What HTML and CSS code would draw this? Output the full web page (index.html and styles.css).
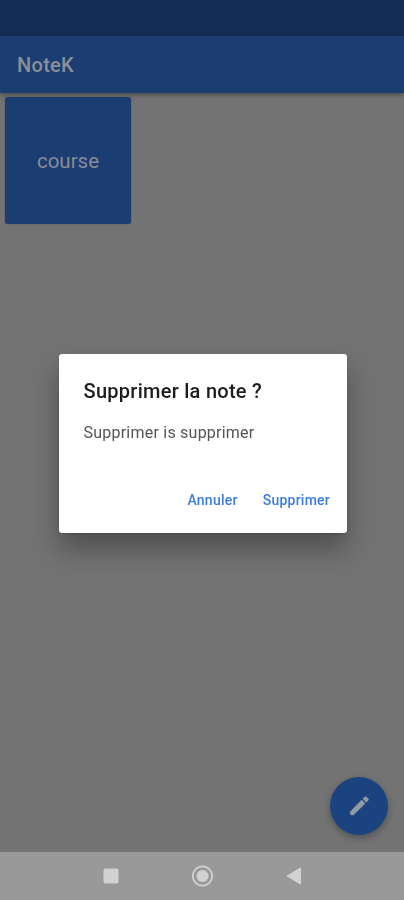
FILE: index.html
```html
<!DOCTYPE html>
<html lang="fr">
<head>
    <meta charset="UTF-8">
    <meta name="viewport" content="width=device-width, initial-scale=1.0">
    <title>NoteK</title>
    <link rel="stylesheet" href="styles.css">
</head>
<body>
    <div class="screen">
        <div class="status-bar"></div>
        <header class="header">
            <h1>NoteK</h1>
        </header>

        <main class="notes">
            <div class="note">course</div>
        </main>

        <!-- Android navigation buttons -->
        <div class="nav-bar">
            <svg width="20" height="20" viewBox="0 0 20 20">
                <rect x="2.5" y="2.5" width="15" height="15" rx="2" fill="#d2d2d2"/>
            </svg>
            <svg width="24" height="24" viewBox="0 0 24 24">
                <circle cx="11.5" cy="12" r="9.7" fill="none" stroke="#d0d0d0" stroke-width="1.8"/>
                <circle cx="11.5" cy="12" r="6" fill="#d2d2d2"/>
            </svg>
            <svg width="20" height="20" viewBox="0 0 20 20">
                <path d="M3 10L16.5 2v16z" fill="#d2d2d2" stroke="#d2d2d2" stroke-width="1" stroke-linejoin="round"/>
            </svg>
        </div>
    </div>

    <button class="fab" aria-label="Nouvelle note">
        <svg width="26" height="26" viewBox="0 0 24 24">
            <path d="M4 17.2V19.2a1 1 0 0 0 1 1h1.9L17.6 9.6l-3.1-3.1zM20.4 6.8a1.1 1.1 0 0 0 0-1.5l-1.6-1.6a1.1 1.1 0 0 0-1.5 0l-1.7 1.7 3.1 3.1z" fill="#949ba4" stroke="#949ba4" stroke-width=".5" stroke-linejoin="round"/>
        </svg>
    </button>

    <div class="dialog" role="dialog">
        <h2>Supprimer la note ?</h2>
        <p>Supprimer is supprimer</p>
        <div class="dialog-actions">
            <button>Annuler</button>
            <button>Supprimer</button>
        </div>
    </div>
</body>
</html>
```

FILE: styles.css
```css
* {
    box-sizing: border-box;
}
body {
    margin: 0;
    font-family: Roboto, "Liberation Sans", sans-serif;
    background-color: #737373;
    overflow: hidden;
}
button {
    font-family: inherit;
    border: none;
    padding: 0;
    background: none;
    cursor: pointer;
}
.screen {
    display: flex;
    flex-direction: column;
    height: 100vh;
}
.status-bar {
    height: 36px;
    background-color: #152d55;
}
.header {
    height: 57px;
    padding-left: 17px;
    display: flex;
    align-items: center;
    background-color: #1c3d72;
    box-shadow: 0 2px 4px rgba(0, 0, 0, 0.35);
}
.header h1 {
    margin: 0;
    font-size: 20px;
    font-weight: 500;
    letter-spacing: 0.3px;
    color: #8a9098;
}
.notes {
    flex: 1;
    padding: 4px 5px;
}
.note {
    width: 126px;
    height: 127px;
    padding-top: 1px;
    display: flex;
    align-items: center;
    justify-content: center;
    border-radius: 3px;
    background-color: #1c3d72;
    color: #858c96;
    font-size: 20.5px;
    box-shadow: 0 0 2px rgba(0, 0, 0, 0.25);
}
.nav-bar {
    height: 48px;
    padding: 0 100px 0 101px;
    display: flex;
    align-items: center;
    justify-content: space-between;
    background-color: #999;
}
.fab {
    position: fixed;
    right: 16px;
    bottom: 65px;
    width: 58px;
    height: 58px;
    display: flex;
    align-items: center;
    justify-content: center;
    border-radius: 50%;
    background-color: #1b4380;
    box-shadow: 0 3px 7px rgba(0, 0, 0, 0.3);
}
.dialog {
    position: fixed;
    top: 354px;
    left: 58.5px;
    width: 288.5px;
    height: 179px;
    padding: 24px 17px 0 25px;
    border-radius: 3px;
    background-color: #fff;
    box-shadow: 0 16px 28px rgba(0, 0, 0, 0.32), 0 1px 3px rgba(0, 0, 0, 0.15);
}
.dialog h2 {
    margin: 0;
    font-size: 20px;
    line-height: 26px;
    font-weight: 500;
    letter-spacing: 0.27px;
    color: #1c1c1c;
}
.dialog p {
    margin: 18px 0 0;
    font-size: 16px;
    line-height: 22px;
    letter-spacing: 0.23px;
    color: #555;
}
.dialog-actions {
    display: flex;
    justify-content: flex-end;
    gap: 25px;
    margin-top: 46px;
}
.dialog-actions button {
    font-size: 14px;
    line-height: 20px;
    font-weight: 500;
    letter-spacing: 0.24px;
    color: #3b7ce0;
}
```
